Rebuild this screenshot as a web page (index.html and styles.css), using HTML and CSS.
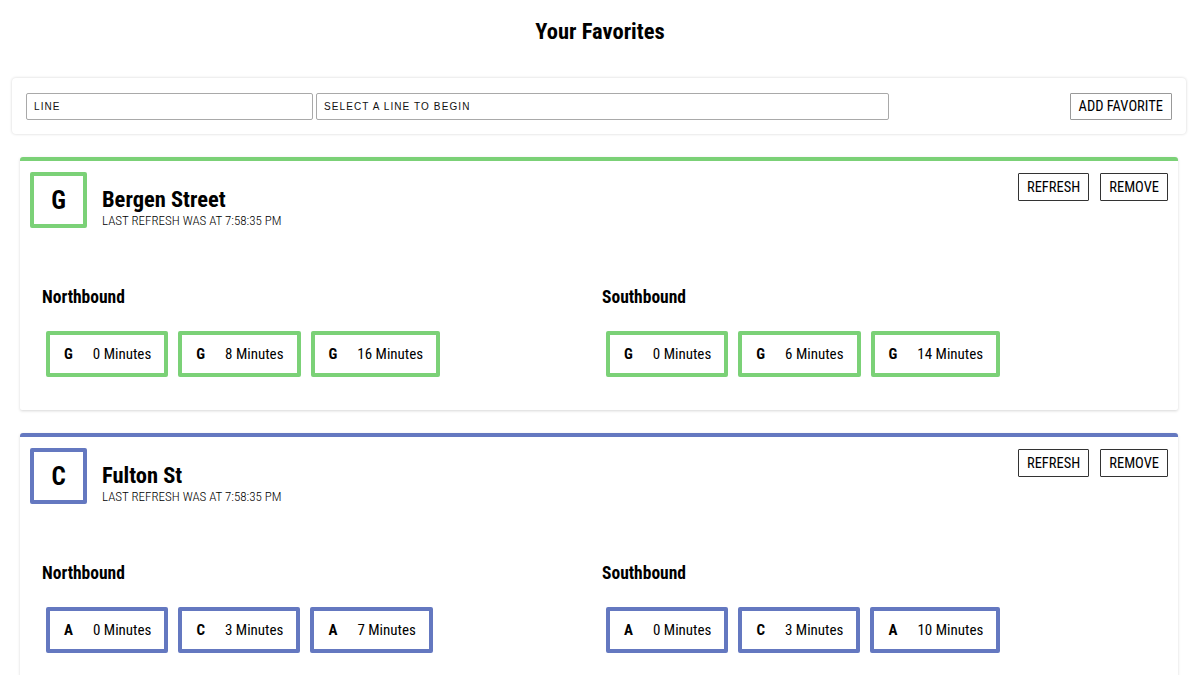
FILE: index.html
```html
<!DOCTYPE html>
<html>
<head>
<meta charset="utf-8">
<link rel="stylesheet" href="styles.css">
</head>
<body>
<h1 class="page-title">Your Favorites</h1>

<form class="add-form">
  <input class="field field-line" type="text" placeholder="LINE">
  <input class="field field-stop" type="text" placeholder="SELECT A LINE TO BEGIN">
  <span class="spacer"></span>
  <button class="btn btn-add" type="button">ADD FAVORITE</button>
</form>

<section class="fav fav-g">
  <header class="fav-head">
    <div class="badge">G</div>
    <div class="fav-info">
      <h2 class="fav-name">Bergen Street</h2>
      <div class="fav-time">LAST REFRESH WAS AT 7:58:35 PM</div>
    </div>
    <div class="fav-actions">
      <button class="btn" type="button">REFRESH</button>
      <button class="btn" type="button">REMOVE</button>
    </div>
  </header>
  <div class="dirs">
    <div class="dir">
      <h3 class="dir-title">Northbound</h3>
      <div class="chips">
        <div class="chip"><b>G</b><span>0 Minutes</span></div>
        <div class="chip"><b>G</b><span>8 Minutes</span></div>
        <div class="chip"><b>G</b><span>16 Minutes</span></div>
      </div>
    </div>
    <div class="dir">
      <h3 class="dir-title">Southbound</h3>
      <div class="chips">
        <div class="chip"><b>G</b><span>0 Minutes</span></div>
        <div class="chip"><b>G</b><span>6 Minutes</span></div>
        <div class="chip"><b>G</b><span>14 Minutes</span></div>
      </div>
    </div>
  </div>
</section>

<section class="fav fav-c">
  <header class="fav-head">
    <div class="badge">C</div>
    <div class="fav-info">
      <h2 class="fav-name">Fulton St</h2>
      <div class="fav-time">LAST REFRESH WAS AT 7:58:35 PM</div>
    </div>
    <div class="fav-actions">
      <button class="btn" type="button">REFRESH</button>
      <button class="btn" type="button">REMOVE</button>
    </div>
  </header>
  <div class="dirs">
    <div class="dir">
      <h3 class="dir-title">Northbound</h3>
      <div class="chips">
        <div class="chip"><b>A</b><span>0 Minutes</span></div>
        <div class="chip"><b>C</b><span>3 Minutes</span></div>
        <div class="chip"><b>A</b><span>7 Minutes</span></div>
      </div>
    </div>
    <div class="dir">
      <h3 class="dir-title">Southbound</h3>
      <div class="chips">
        <div class="chip"><b>A</b><span>0 Minutes</span></div>
        <div class="chip"><b>C</b><span>3 Minutes</span></div>
        <div class="chip"><b>A</b><span>10 Minutes</span></div>
      </div>
    </div>
  </div>
</section>
</body>
</html>
```

FILE: styles.css
```css
* { box-sizing: border-box; }

body {
  margin: 0;
  background: #ffffff;
  color: #000;
  font-family: "Roboto Condensed", "DejaVu Sans Condensed", "Liberation Sans Narrow", Roboto, sans-serif;
  font-stretch: condensed;
}

.page-title {
  margin: 0;
  padding-top: 19px;
  height: 78px;
  text-align: center;
  font-size: 22.5px;
  font-weight: 700;
  line-height: 24px;
}

.add-form {
  display: flex;
  align-items: center;
  gap: 3px;
  margin: 0 14px 0 12px;
  height: 56px;
  padding: 0 14px;
  background: #fff;
  border-radius: 4px;
  box-shadow: 0 0 3px rgba(0,0,0,0.18);
}

.field {
  height: 27px;
  border: 1px solid #a9a9a9;
  border-radius: 2px;
  padding: 0 7px;
  font-family: "Liberation Sans", Arial, sans-serif;
  font-size: 10px;
  letter-spacing: 1.1px;
  color: #000;
}
.field::placeholder { color: #111; }
.field-line { width: 287px; }
.field-stop { width: 573px; }
.spacer { flex: 1; }

.btn {
  height: 28px;
  padding: 0 8px;
  background: #fff;
  border: 1px solid #333;
  border-radius: 1px;
  font-family: inherit;
  font-stretch: condensed;
  font-size: 14.5px;
  color: #000;
}
.btn-add {
  height: 27px;
  border-color: #999;
  padding: 0 8px;
}

.fav {
  margin: 23px 22px 0 20px;
  background: #fff;
  border-top: 4px solid;
  border-radius: 3px 3px 2px 2px;
  box-shadow: 0 1px 3px rgba(0,0,0,0.16);
  padding: 11px 10px 33px 10px;
}
.fav-g { border-top-color: #7bd177; }
.fav-c { border-top-color: #6478c0; }
.fav-g .badge, .fav-g .chip { border-color: #7bd177; }
.fav-c .badge, .fav-c .chip { border-color: #6478c0; }

.fav-head {
  display: flex;
  align-items: flex-start;
}

.badge {
  width: 57px;
  height: 56px;
  border: 4px solid;
  border-radius: 2px;
  display: flex;
  align-items: center;
  justify-content: center;
  font-size: 25px;
  font-weight: 700;
}

.fav-info {
  flex: 1;
  padding-left: 15px;
  padding-top: 15px;
}
.fav-name {
  margin: 0;
  font-size: 22.5px;
  line-height: 24px;
  font-weight: 700;
}
.fav-time {
  margin-top: 2px;
  font-size: 13px;
  line-height: 15px;
  font-weight: 300;
}

.fav-actions {
  display: flex;
  gap: 11px;
  padding-top: 1px;
}

.dirs {
  display: grid;
  grid-template-columns: 560px 1fr;
  padding-left: 12px;
  margin-top: 59px;
}

.dir-title {
  margin: 0 0 24px;
  font-size: 17.5px;
  line-height: 20px;
  font-weight: 700;
}

.chips {
  display: flex;
  gap: 10px;
  padding-left: 4px;
}

.chip {
  height: 46px;
  border: 4px solid;
  border-radius: 2px;
  display: flex;
  align-items: center;
  padding: 0 13px 0 14px;
  font-size: 15px;
}
.chip b {
  font-weight: 700;
  margin-right: 20px;
}
```
